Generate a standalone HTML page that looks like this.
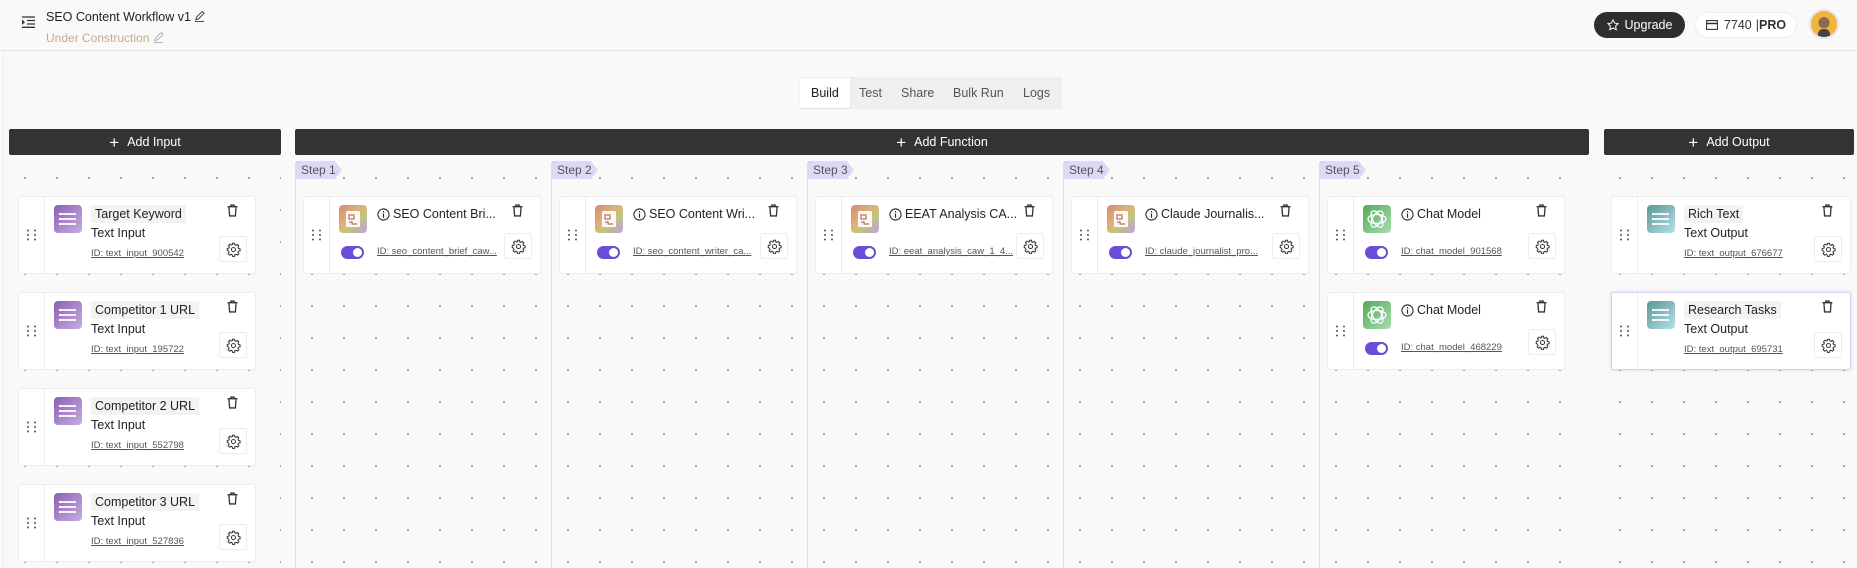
<!DOCTYPE html>
<html><head><meta charset="utf-8"><style>
*{box-sizing:border-box;margin:0;padding:0}
body{width:1857px;height:568px;overflow:hidden;background:#f9f9f9;font-family:"Liberation Sans",Arial,sans-serif;color:#222;position:relative}
.abs{position:absolute}
.hdr{position:absolute;left:0;top:0;width:1857px;height:51px;border-bottom:1px solid #e6e6e6;background:#f9f9f9}
.bar{position:absolute;top:129px;height:26px;background:#333;color:#fff;font-size:12.5px;display:flex;align-items:center;justify-content:center;border-radius:2px}
.bar span{font-size:17px;margin-right:8px;font-weight:300;line-height:1}
.col{position:absolute;top:162px;height:406px;background-image:radial-gradient(circle,#9a9a9a 0.9px,transparent 1.3px);background-size:32px 32px}
.step{border-left:1px solid #dcd8f5}
.steplbl{position:absolute;top:161px;height:18px;padding-left:5px;width:46px;background:#dcd8f5;color:#555;font-size:12px;line-height:18px;clip-path:polygon(0 0,84% 0,100% 50%,84% 100%,0 100%)}
.card{position:absolute;width:238px;height:78px;background:#fff;border:1px solid #ececec;border-radius:3px}
.drag{position:absolute;left:0;top:0;bottom:0;width:26px;border-right:1px solid #ececec}
.drag svg{position:absolute;left:7px;top:32px}
.ic{position:absolute;left:35px;top:8px;width:28px;height:28px;border-radius:4px;overflow:hidden}
.ic.in{background:linear-gradient(135deg,#8c5fb0,#c6aee3)}
.ic.out{background:linear-gradient(135deg,#5a9696,#b5e0ea)}
.ic.gpt{background:linear-gradient(135deg,#55aa60,#a8dba9)}
.ic.fn{background:linear-gradient(135deg,#d98a7a,#dcb07a 40%,#c8c27c 60%,#b9a2e0)}
.chip{position:absolute;left:72px;top:8px;height:18px;padding:0 4px;background:#f3f3f6;font-size:12.5px;line-height:18px;color:#222}
.sub{position:absolute;left:72px;top:28px;font-size:12.5px;line-height:17px;color:#222}
.id{position:absolute;left:72px;top:51px;font-size:9.5px;color:#555;text-decoration:underline;white-space:nowrap}
.ttl{position:absolute;left:73px;top:9px;font-size:12.5px;line-height:17px;color:#222;white-space:nowrap;display:flex;align-items:center}
.ttl svg{margin-right:3px}
.tog{position:absolute;left:37px;top:49px;width:23px;height:13px;border-radius:7px;background:#6a4cd6}
.tog:after{content:"";position:absolute;right:2px;top:2px;width:9px;height:9px;border-radius:50%;background:#fff}
.fid{position:absolute;left:73px;top:49px;font-size:9.5px;color:#555;text-decoration:underline;white-space:nowrap}
.trash{position:absolute;left:207px;top:7px}
.gear{position:absolute;left:200px;top:39px;width:28px;height:26px;border:1px solid #ececec;border-radius:2px;display:flex;align-items:center;justify-content:center;background:#fff}
.fnc .gear{top:36px}
</style></head><body>
<svg width="0" height="0" style="position:absolute">
<defs>
<symbol id="dots" viewBox="0 0 12 12"><g fill="#555"><circle cx="2" cy="1.5" r="1"/><circle cx="9" cy="1.5" r="1"/><circle cx="2" cy="6" r="1"/><circle cx="9" cy="6" r="1"/><circle cx="2" cy="10.5" r="1"/><circle cx="9" cy="10.5" r="1"/></g></symbol>
<symbol id="trash" viewBox="0 0 12 12"><g fill="none" stroke="#333" stroke-width="1.2"><path d="M1.5 2.5h9M4.5 2.5V1h3v1.5M2.7 2.5l.6 8.5h5.4l.6-8.5"/></g></symbol>
<symbol id="gear" viewBox="0 0 24 24"><g fill="none" stroke="#333" stroke-width="1.6"><path d="M10.3 2h3.4l.5 2.6 1.8.8 2.2-1.5 2.4 2.4-1.5 2.2.8 1.8 2.6.5v3.4l-2.6.5-.8 1.8 1.5 2.2-2.4 2.4-2.2-1.5-1.8.8-.5 2.6h-3.4l-.5-2.6-1.8-.8-2.2 1.5-2.4-2.4 1.5-2.2-.8-1.8L2 13.7v-3.4l2.6-.5.8-1.8-1.5-2.2 2.4-2.4 2.2 1.5 1.8-.8z"/><circle cx="12" cy="12" r="3.3"/></g></symbol>
<symbol id="lines" viewBox="0 0 28 28"><g stroke="#fff" stroke-width="1.8"><path d="M6 9h16M6 14h16M6 19h16"/></g><g fill="#fff"><rect x="5" y="8" width="2" height="2"/><rect x="5" y="13" width="2" height="2"/><rect x="5" y="18" width="2" height="2"/></g></symbol>
<symbol id="doc" viewBox="0 0 28 28"><rect x="7" y="6" width="14" height="16" rx="1" fill="#fff" opacity=".92"/><rect x="10" y="10" width="5" height="4" fill="none" stroke="#c06a5a" stroke-width="1.2"/><path d="M10 17h3v2h5" stroke="#c06a5a" stroke-width="1.2" fill="none"/></symbol>
<symbol id="gpt" viewBox="0 0 28 28"><g fill="none" stroke="#fff" stroke-width="1.3"><ellipse cx="14" cy="14" rx="9" ry="4.5"/><ellipse cx="14" cy="14" rx="9" ry="4.5" transform="rotate(60 14 14)"/><ellipse cx="14" cy="14" rx="9" ry="4.5" transform="rotate(120 14 14)"/></g></symbol>
<symbol id="info" viewBox="0 0 14 14"><circle cx="7" cy="7" r="6" fill="none" stroke="#222" stroke-width="1.1"/><path d="M7 6v4.5" stroke="#222" stroke-width="1.2"/><circle cx="7" cy="4" r=".8" fill="#222"/></symbol>
</defs></svg>

<div class="abs" style="left:3px;top:0;width:1px;height:568px;background:#ececec"></div>
<div class="hdr">
 <svg class="abs" style="left:21px;top:16px" width="15" height="12" viewBox="0 0 15 12"><g stroke="#333" stroke-width="1.3"><path d="M1 1h13M6 4.5h8M6 8h8M1 11.3h13"/></g><path d="M1 3.5l3 2.7-3 2.7z" fill="#333"/></svg>
 <div class="abs" style="left:46px;top:10px;font-size:12.5px;color:#222;white-space:nowrap">SEO Content Workflow v1 <svg width="11" height="11" viewBox="0 0 12 12" style="vertical-align:-1px"><path d="M2 9.5l1-3 6-6 2 2-6 6zM1 11.5h10" fill="none" stroke="#333" stroke-width="1"/></svg></div>
 <div class="abs" style="left:46px;top:31px;font-size:12px;color:#c6ab8a;white-space:nowrap">Under Construction <svg width="11" height="11" viewBox="0 0 12 12" style="vertical-align:-1px"><path d="M2 9.5l1-3 6-6 2 2-6 6zM1 11.5h10" fill="none" stroke="#aaa" stroke-width="1"/></svg></div>
 <div class="abs" style="left:1594px;top:12px;width:91px;height:26px;border-radius:13px;background:#2e2e2e;color:#fff;font-size:12.5px;display:flex;align-items:center;justify-content:center"><svg width="12" height="12" viewBox="0 0 12 12" style="margin-right:6px"><path d="M6 .8l1.6 3.3 3.6.5-2.6 2.5.6 3.6L6 9 2.8 10.7l.6-3.6L.8 4.6l3.6-.5z" fill="none" stroke="#fff" stroke-width="1"/></svg>Upgrade</div>
 <div class="abs" style="left:1695px;top:12px;width:102px;height:26px;border-radius:13px;background:#fff;border:1px solid #eee;font-size:12.5px;display:flex;align-items:center;justify-content:center;color:#333"><svg width="12" height="10" viewBox="0 0 12 10" style="margin-right:6px"><rect x=".6" y=".6" width="10.8" height="8.8" fill="none" stroke="#333" stroke-width="1.1"/><path d="M.6 3.5h10.8" stroke="#333" stroke-width="1.5"/></svg>7740 <span style="margin-left:4px">|<b>PRO</b></span></div>
 <div class="abs" style="left:1809px;top:9px;width:30px;height:30px;border-radius:50%;background:#e6e3f3;padding:2px"><div style="width:26px;height:26px;border-radius:50%;background:radial-gradient(circle at 50% 45%,#8a6a55 0 28%,#f0b53a 30%);position:relative;overflow:hidden"><div style="position:absolute;left:7px;top:18px;width:12px;height:10px;background:#444;border-radius:5px 5px 0 0"></div></div></div>
</div>

<div class="abs" style="left:800px;top:77px;width:262px;height:32px;background:#efefef;border-radius:2px;font-size:12.5px;color:#555">
 <div class="abs" style="left:0;top:1px;width:50px;height:30px;background:#fff;border-radius:2px;box-shadow:0 1px 2px rgba(0,0,0,.08)"></div>
 <span class="abs" style="left:11px;top:9px;color:#222">Build</span>
 <span class="abs" style="left:59px;top:9px">Test</span>
 <span class="abs" style="left:101px;top:9px">Share</span>
 <span class="abs" style="left:153px;top:9px">Bulk Run</span>
 <span class="abs" style="left:223px;top:9px">Logs</span>
</div>

<div class="bar" style="left:9px;width:272px"><span>+</span>Add Input</div>
<div class="bar" style="left:295px;width:1294px"><span>+</span>Add Function</div>
<div class="bar" style="left:1604px;width:250px"><span>+</span>Add Output</div>

<div class="col" style="left:9px;width:272px"></div>
<div class="col step" style="left:295px;width:256px"></div>
<div class="col step" style="left:551px;width:256px"></div>
<div class="col step" style="left:807px;width:256px"></div>
<div class="col step" style="left:1063px;width:256px"></div>
<div class="col step" style="left:1319px;width:270px"></div>
<div class="col" style="left:1604px;width:253px"></div>
<div class="steplbl" style="left:296px">Step 1</div>
<div class="steplbl" style="left:552px">Step 2</div>
<div class="steplbl" style="left:808px">Step 3</div>
<div class="steplbl" style="left:1064px">Step 4</div>
<div class="steplbl" style="left:1320px">Step 5</div>

<!-- inputs -->
<div class="card" style="left:18px;top:196px"><div class="drag"><svg width="12" height="12"><use href="#dots"/></svg></div><div class="ic in"><svg width="28" height="28"><use href="#lines"/></svg></div><div class="chip">Target Keyword</div><div class="sub">Text Input</div><div class="id">ID: text_input_900542</div><svg class="trash" width="13" height="13"><use href="#trash"/></svg><div class="gear"><svg width="15" height="15"><use href="#gear"/></svg></div></div>
<div class="card" style="left:18px;top:292px"><div class="drag"><svg width="12" height="12"><use href="#dots"/></svg></div><div class="ic in"><svg width="28" height="28"><use href="#lines"/></svg></div><div class="chip">Competitor 1 URL</div><div class="sub">Text Input</div><div class="id">ID: text_input_195722</div><svg class="trash" width="13" height="13"><use href="#trash"/></svg><div class="gear"><svg width="15" height="15"><use href="#gear"/></svg></div></div>
<div class="card" style="left:18px;top:388px"><div class="drag"><svg width="12" height="12"><use href="#dots"/></svg></div><div class="ic in"><svg width="28" height="28"><use href="#lines"/></svg></div><div class="chip">Competitor 2 URL</div><div class="sub">Text Input</div><div class="id">ID: text_input_552798</div><svg class="trash" width="13" height="13"><use href="#trash"/></svg><div class="gear"><svg width="15" height="15"><use href="#gear"/></svg></div></div>
<div class="card" style="left:18px;top:484px"><div class="drag"><svg width="12" height="12"><use href="#dots"/></svg></div><div class="ic in"><svg width="28" height="28"><use href="#lines"/></svg></div><div class="chip">Competitor 3 URL</div><div class="sub">Text Input</div><div class="id">ID: text_input_527836</div><svg class="trash" width="13" height="13"><use href="#trash"/></svg><div class="gear"><svg width="15" height="15"><use href="#gear"/></svg></div></div>

<!-- functions -->
<div class="card fnc" style="left:303px;top:196px"><div class="drag"><svg width="12" height="12"><use href="#dots"/></svg></div><div class="ic fn"><svg width="28" height="28"><use href="#doc"/></svg></div><div class="ttl"><svg width="13" height="13"><use href="#info"/></svg>SEO Content Bri...</div><div class="tog"></div><div class="fid">ID: seo_content_brief_caw...</div><svg class="trash" width="13" height="13"><use href="#trash"/></svg><div class="gear"><svg width="15" height="15"><use href="#gear"/></svg></div></div>
<div class="card fnc" style="left:559px;top:196px"><div class="drag"><svg width="12" height="12"><use href="#dots"/></svg></div><div class="ic fn"><svg width="28" height="28"><use href="#doc"/></svg></div><div class="ttl"><svg width="13" height="13"><use href="#info"/></svg>SEO Content Wri...</div><div class="tog"></div><div class="fid">ID: seo_content_writer_ca...</div><svg class="trash" width="13" height="13"><use href="#trash"/></svg><div class="gear"><svg width="15" height="15"><use href="#gear"/></svg></div></div>
<div class="card fnc" style="left:815px;top:196px"><div class="drag"><svg width="12" height="12"><use href="#dots"/></svg></div><div class="ic fn"><svg width="28" height="28"><use href="#doc"/></svg></div><div class="ttl"><svg width="13" height="13"><use href="#info"/></svg>EEAT Analysis CA...</div><div class="tog"></div><div class="fid">ID: eeat_analysis_caw_1_4...</div><svg class="trash" width="13" height="13"><use href="#trash"/></svg><div class="gear"><svg width="15" height="15"><use href="#gear"/></svg></div></div>
<div class="card fnc" style="left:1071px;top:196px"><div class="drag"><svg width="12" height="12"><use href="#dots"/></svg></div><div class="ic fn"><svg width="28" height="28"><use href="#doc"/></svg></div><div class="ttl"><svg width="13" height="13"><use href="#info"/></svg>Claude Journalis...</div><div class="tog"></div><div class="fid">ID: claude_journalist_pro...</div><svg class="trash" width="13" height="13"><use href="#trash"/></svg><div class="gear"><svg width="15" height="15"><use href="#gear"/></svg></div></div>
<div class="card fnc" style="left:1327px;top:196px"><div class="drag"><svg width="12" height="12"><use href="#dots"/></svg></div><div class="ic gpt"><svg width="28" height="28"><use href="#gpt"/></svg></div><div class="ttl"><svg width="13" height="13"><use href="#info"/></svg>Chat Model</div><div class="tog"></div><div class="fid">ID: chat_model_901568</div><svg class="trash" width="13" height="13"><use href="#trash"/></svg><div class="gear"><svg width="15" height="15"><use href="#gear"/></svg></div></div>
<div class="card fnc" style="left:1327px;top:292px"><div class="drag"><svg width="12" height="12"><use href="#dots"/></svg></div><div class="ic gpt"><svg width="28" height="28"><use href="#gpt"/></svg></div><div class="ttl"><svg width="13" height="13"><use href="#info"/></svg>Chat Model</div><div class="tog"></div><div class="fid">ID: chat_model_468229</div><svg class="trash" width="13" height="13"><use href="#trash"/></svg><div class="gear"><svg width="15" height="15"><use href="#gear"/></svg></div></div>

<!-- outputs -->
<div class="card" style="left:1611px;top:196px;width:240px"><div class="drag"><svg width="12" height="12"><use href="#dots"/></svg></div><div class="ic out"><svg width="28" height="28"><use href="#lines"/></svg></div><div class="chip">Rich Text</div><div class="sub">Text Output</div><div class="id">ID: text_output_676677</div><svg class="trash" width="13" height="13" style="left:209px"><use href="#trash"/></svg><div class="gear" style="left:202px"><svg width="15" height="15"><use href="#gear"/></svg></div></div>
<div class="card" style="left:1611px;top:292px;width:240px;border-color:#d6d0f4;box-shadow:0 0 3px rgba(120,100,220,.25)"><div class="drag"><svg width="12" height="12"><use href="#dots"/></svg></div><div class="ic out"><svg width="28" height="28"><use href="#lines"/></svg></div><div class="chip">Research Tasks</div><div class="sub">Text Output</div><div class="id">ID: text_output_695731</div><svg class="trash" width="13" height="13" style="left:209px"><use href="#trash"/></svg><div class="gear" style="left:202px"><svg width="15" height="15"><use href="#gear"/></svg></div></div>
</body></html>
